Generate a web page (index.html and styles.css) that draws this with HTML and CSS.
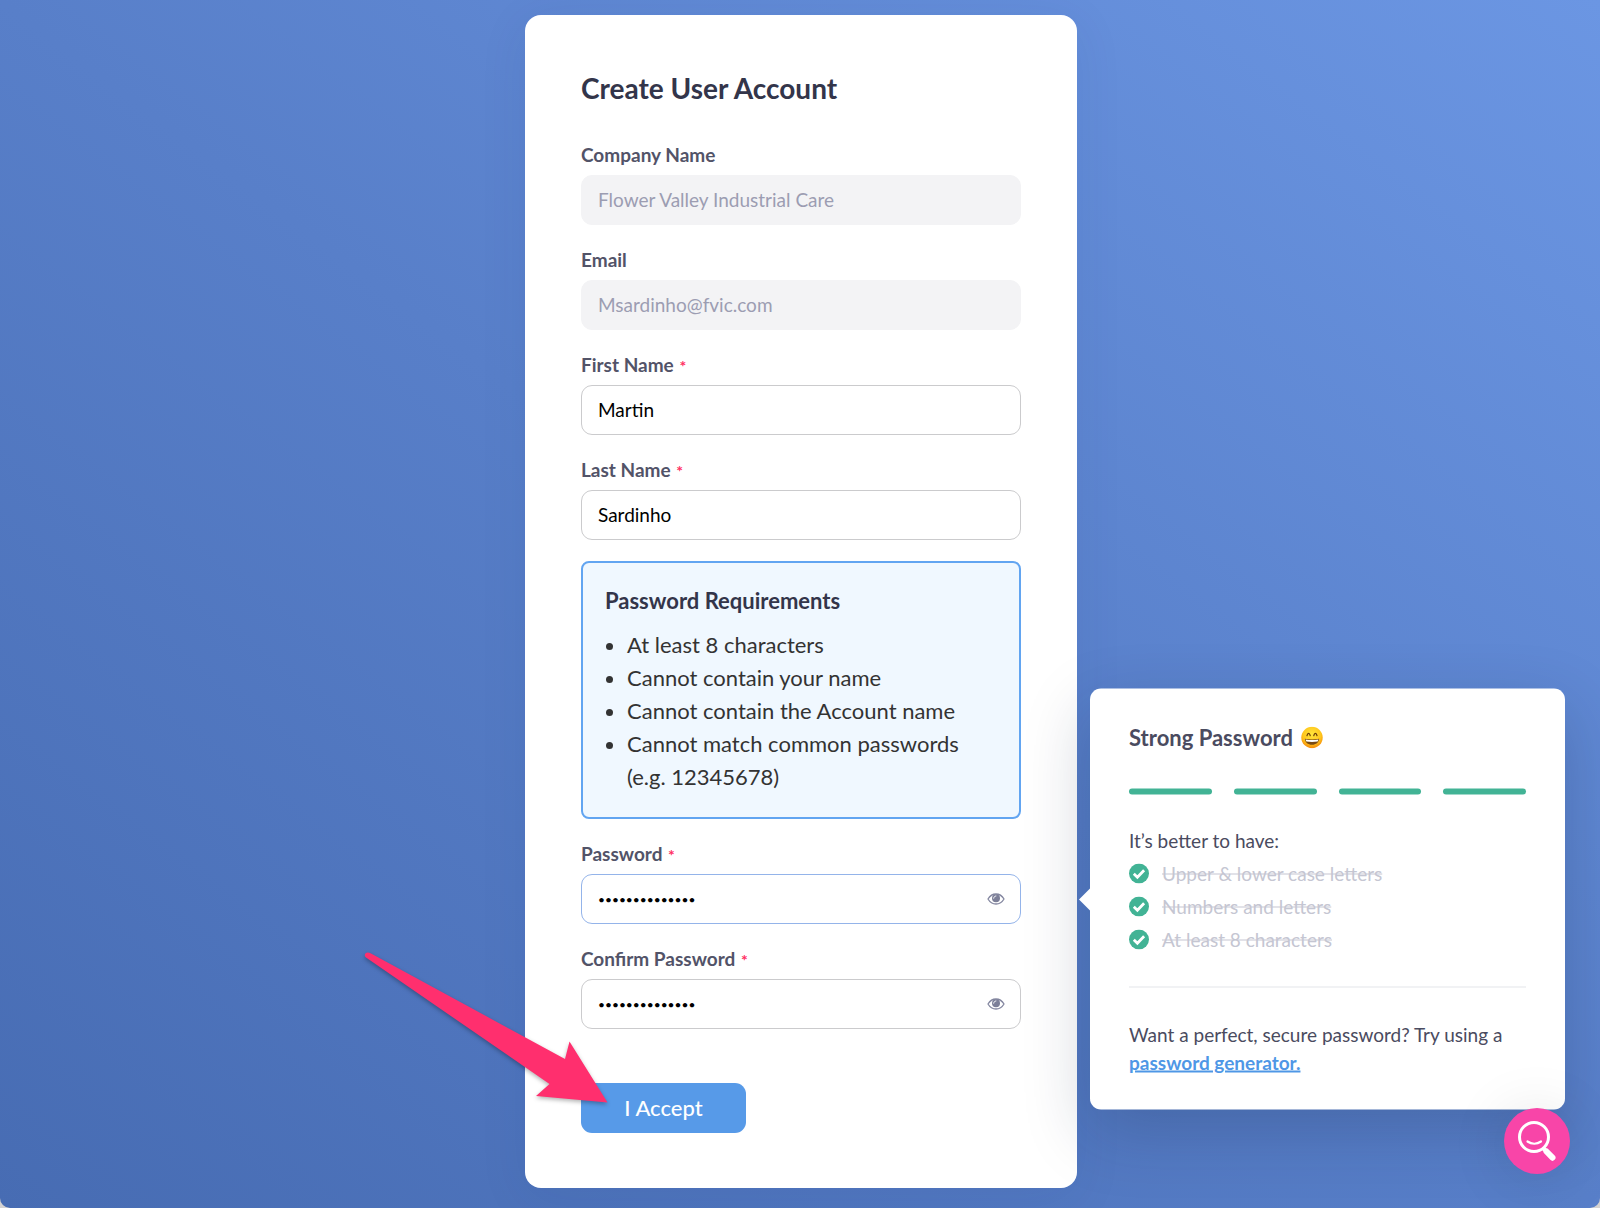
FILE: index.html
```html
<!DOCTYPE html>
<html lang="en">
<head>
<meta charset="utf-8">
<meta name="viewport" content="width=device-width, initial-scale=1">
<title>Create User Account</title>
<link rel="stylesheet" href="styles.css">
</head>
<body>
<main class="page">
  <form class="card">
    <h1 class="card-title">Create User Account</h1>

    <div class="field">
      <label class="label" for="company">Company Name</label>
      <input class="input" id="company" type="text" value="Flower Valley Industrial Care" disabled>
    </div>
    <div class="field">
      <label class="label" for="email">Email</label>
      <input class="input" id="email" type="email" value="Msardinho@fvic.com" disabled>
    </div>
    <div class="field">
      <label class="label" for="first">First Name <span class="required">*</span></label>
      <input class="input" id="first" type="text" value="Martin">
    </div>
    <div class="field">
      <label class="label" for="last">Last Name <span class="required">*</span></label>
      <input class="input" id="last" type="text" value="Sardinho">
    </div>

    <section class="rules">
      <h2 class="rules-title">Password Requirements</h2>
      <ul class="rules-list">
        <li>At least 8 characters</li>
        <li>Cannot contain your name</li>
        <li>Cannot contain the Account name</li>
        <li>Cannot match common passwords (e.g.&nbsp;12345678)</li>
      </ul>
    </section>

    <div class="field">
      <label class="label" for="password">Password <span class="required">*</span></label>
      <div class="input-wrap">
        <input class="input input-password input-active" id="password" type="password" value="Qm7vTr2xKp9zLw">
        <button class="reveal" type="button" aria-label="Show password">
          <svg class="eye" viewBox="0 0 18 12" aria-hidden="true"><path d="M1 6C3 2.600 5.800 1 9 1s6 1.600 8 5c-2 3.400-4.800 5-8 5S3 9.400 1 6z" fill="none" stroke="#8487a0" stroke-width="1.300"/><circle cx="9" cy="5.300" r="4" fill="#7c7f98"/><path d="M6.700 5.200C6.800 3.900 7.700 3.100 8.900 3" fill="none" stroke="#fff" stroke-width="1" stroke-linecap="round"/></svg>
        </button>
        <aside class="popover">
          <h2 class="popover-title">Strong Password
            <svg class="emoji" viewBox="0 0 22 22" role="img" aria-label="smiling face">
              <defs><radialGradient id="face" cx=".5" cy=".35" r=".65"><stop offset="0" stop-color="#ffe63d"/><stop offset=".65" stop-color="#ffc61c"/><stop offset="1" stop-color="#f5890a"/></radialGradient></defs>
              <circle cx="11" cy="11" r="10.700" fill="url(#face)"/>
              <path d="M6 9.200c.3-1.700 1-2.400 1.600-2.400s1.300.7 1.600 2.400M12.800 9.200c.3-1.700 1-2.400 1.600-2.400s1.300.7 1.600 2.400" fill="none" stroke="#6b3a06" stroke-width="1.200" stroke-linecap="round"/>
              <path d="M3.800 12.300c4.600.9 9.800.9 14.400 0-.3 3.700-3.200 6-7.200 6s-6.900-2.300-7.200-6z" fill="#7a4a12"/>
              <path d="M4.600 13c4.200.8 8.600.8 12.800 0-.1.800-.4 1.500-.8 2.100-3.600.6-7.600.6-11.200 0-.4-.6-.7-1.300-.8-2.100z" fill="#fff"/>
            </svg>
          </h2>
          <div class="meter" role="img" aria-label="Password strength 4 of 4">
            <span class="meter-bar"></span><span class="meter-bar"></span><span class="meter-bar"></span><span class="meter-bar"></span>
          </div>
          <p class="hint">It’s better to have:</p>
          <ul class="checks">
            <li class="check"><svg class="tick" viewBox="0 0 20 20" aria-hidden="true"><circle cx="10" cy="10" r="10" fill="#42b395"/><path d="M4.800 10.300l3.600 3.500 6.700-7" fill="none" stroke="#fff" stroke-width="2.800"/></svg><s>Upper &amp; lower case letters</s></li>
            <li class="check"><svg class="tick" viewBox="0 0 20 20" aria-hidden="true"><circle cx="10" cy="10" r="10" fill="#42b395"/><path d="M4.800 10.300l3.600 3.500 6.700-7" fill="none" stroke="#fff" stroke-width="2.800"/></svg><s>Numbers and letters</s></li>
            <li class="check"><svg class="tick" viewBox="0 0 20 20" aria-hidden="true"><circle cx="10" cy="10" r="10" fill="#42b395"/><path d="M4.800 10.300l3.600 3.500 6.700-7" fill="none" stroke="#fff" stroke-width="2.800"/></svg><s>At least 8 characters</s></li>
          </ul>
          <p class="tip">Want a perfect, secure password? Try using a <a class="link" href="#generator">password generator.</a></p>
        </aside>
      </div>
    </div>
    <div class="field">
      <label class="label" for="confirm">Confirm Password <span class="required">*</span></label>
      <div class="input-wrap">
        <input class="input input-password" id="confirm" type="password" value="Qm7vTr2xKp9zLw">
        <button class="reveal" type="button" aria-label="Show password">
          <svg class="eye" viewBox="0 0 18 12" aria-hidden="true"><path d="M1 6C3 2.600 5.800 1 9 1s6 1.600 8 5c-2 3.400-4.800 5-8 5S3 9.400 1 6z" fill="none" stroke="#8487a0" stroke-width="1.300"/><circle cx="9" cy="5.300" r="4" fill="#7c7f98"/><path d="M6.700 5.200C6.800 3.900 7.700 3.100 8.900 3" fill="none" stroke="#fff" stroke-width="1" stroke-linecap="round"/></svg>
        </button>
      </div>
    </div>

    <div class="actions">
      <button class="accept" type="submit">I Accept</button>
      <svg class="pointer" viewBox="0 0 260 170" aria-hidden="true"><path d="M11 10.500L205 116l4.500-17.500L247.500 159.500l-71.500-6.500 13.500-12L6 14.500C3 12 6 7.500 11 10.500z" transform="translate(8 4)" fill="#ff2f6e"/></svg>
    </div>
  </form>
</main>
<button class="help" type="button" aria-label="Search help">
  <svg class="help-icon" viewBox="0 0 66 66" aria-hidden="true"><circle cx="30" cy="29" r="14.500" fill="none" stroke="#fff" stroke-width="3"/><path d="M23.500 33.500c4 2.800 9.500 2.800 13.500 0" fill="none" stroke="#fff" stroke-width="2.200" stroke-linecap="round"/><path d="M39 40l3 3" stroke="#fff" stroke-width="4"/><path d="M42.500 43.500l6 6.200" stroke="#fff" stroke-width="6" stroke-linecap="round"/></svg>
</button>
</body>
</html>
```
FILE: styles.css
```css
* { box-sizing: border-box; }

body {
  margin: 0;
  background: #d5d3d2;
  color: #4a4b60;
  font-family: Lato, "Open Sans", sans-serif;
  font-size: 19px;
}

h1, h2, p, ul { margin: 0; padding: 0; }
button, input { font: inherit; }

.page {
  display: flex;
  justify-content: center;
  align-items: flex-start;
  min-height: 100vh;
  padding: 15px 19px 20px 21px;
  border-radius: 0 0 10px 10px;
  background: linear-gradient(to top right, #476cb3, #587fc9 50%, #6b96e3);
  overflow: hidden;
}

.card {
  width: 552px;
  padding: 56px 56px 55px;
  border-radius: 16px;
  background: #fff;
  box-shadow: 0 10px 50px rgba(30, 50, 110, 0.08);
}

.card-title {
  margin-bottom: 40px;
  color: #33354a;
  font-size: 28px;
  line-height: 34px;
}

.field { margin-bottom: 25px; }

.label {
  display: block;
  margin-bottom: 10px;
  color: #525368;
  font-weight: 700;
  line-height: 20px;
}

.required {
  margin-left: 1px;
  color: #ff2f5f;
  font-size: 16px;
  line-height: 16px;
}

.input {
  display: block;
  width: 100%;
  height: 50px;
  padding: 0 16px 2px;
  border: 1px solid #cbcbcd;
  border-radius: 11px;
  background: transparent;
  color: #000;
  outline: none;
}

.input:disabled {
  border-color: #f3f3f5;
  background: #f3f3f5;
  color: #9c9db2;
}

.input-wrap { position: relative; }

.input-password {
  padding: 0 48px 0 16px;
  font-size: 12px;
}

.input-active { border-color: #94b4ea; }

.reveal {
  position: absolute;
  top: 0;
  right: 7px;
  display: flex;
  align-items: center;
  justify-content: center;
  width: 36px;
  height: 50px;
  padding: 0;
  border: 0;
  background: none;
}

.eye { width: 18px; height: 12px; }

.rules {
  margin: -4px 0 25px;
  padding: 22px 22px 24px;
  border: 2px solid #62a5f1;
  border-radius: 8px;
  background: #f0f8ff;
}

.rules-title {
  margin-bottom: 11px;
  color: #33354a;
  font-size: 22px;
  line-height: 32px;
}

.rules-list {
  padding-left: 22px;
  color: #333;
  font-size: 22px;
  line-height: 33px;
}

.actions {
  position: relative;
  margin-top: 54px;
}

.accept {
  display: block;
  width: 165px;
  height: 50px;
  padding: 0 0 2px;
  border: 0;
  border-radius: 11px;
  background: #579ae8;
  color: #fff;
  font-size: 22px;
  font-weight: 500;
}

.pointer {
  position: absolute;
  top: -144px;
  left: -229px;
  width: 260px;
  height: 170px;
  filter: drop-shadow(0 2px 2px rgba(0, 0, 0, 0.3));
  pointer-events: none;
}

.popover {
  position: absolute;
  top: 50%;
  left: calc(100% + 69px);
  width: 475px;
  padding: 33px 39px;
  border-radius: 11px;
  background: #fff;
  box-shadow: 0 22px 66px rgba(20, 30, 65, 0.22);
  transform: translateY(-50%);
}

.popover::before {
  content: "";
  position: absolute;
  top: 50%;
  right: 100%;
  border: 11px solid transparent;
  border-left: 0;
  border-right-color: #fff;
  transform: translateY(-50%);
}

.popover-title {
  display: flex;
  align-items: center;
  gap: 8px;
  font-size: 22px;
  line-height: 32px;
}

.emoji { width: 22px; height: 22px; }

.meter {
  display: grid;
  grid-template-columns: repeat(4, 1fr);
  gap: 22px;
  margin: 35px 0 29px;
}

.meter-bar {
  height: 6px;
  border-radius: 3px;
  background: #42b395;
}

.hint { line-height: 33px; }
.checks { list-style: none; }

.check {
  display: flex;
  align-items: center;
  gap: 13px;
  color: #c5c6d2;
  line-height: 33px;
}

.tick { width: 20px; height: 20px; }

.tip {
  margin-top: 31px;
  padding-top: 33px;
  border-top: 1px solid #e4e5e9;
  line-height: 28px;
}

.link {
  color: #4f97e6;
  font-weight: 700;
  text-decoration-thickness: 2px;
}

.help {
  position: fixed;
  right: 30px;
  bottom: 34px;
  width: 66px;
  height: 66px;
  padding: 0;
  border: 0;
  border-radius: 50%;
  background: #f845a8;
  box-shadow: 0 4px 60px rgba(0, 0, 0, 0.12);
}

.help-icon { display: block; width: 66px; height: 66px; }
```
